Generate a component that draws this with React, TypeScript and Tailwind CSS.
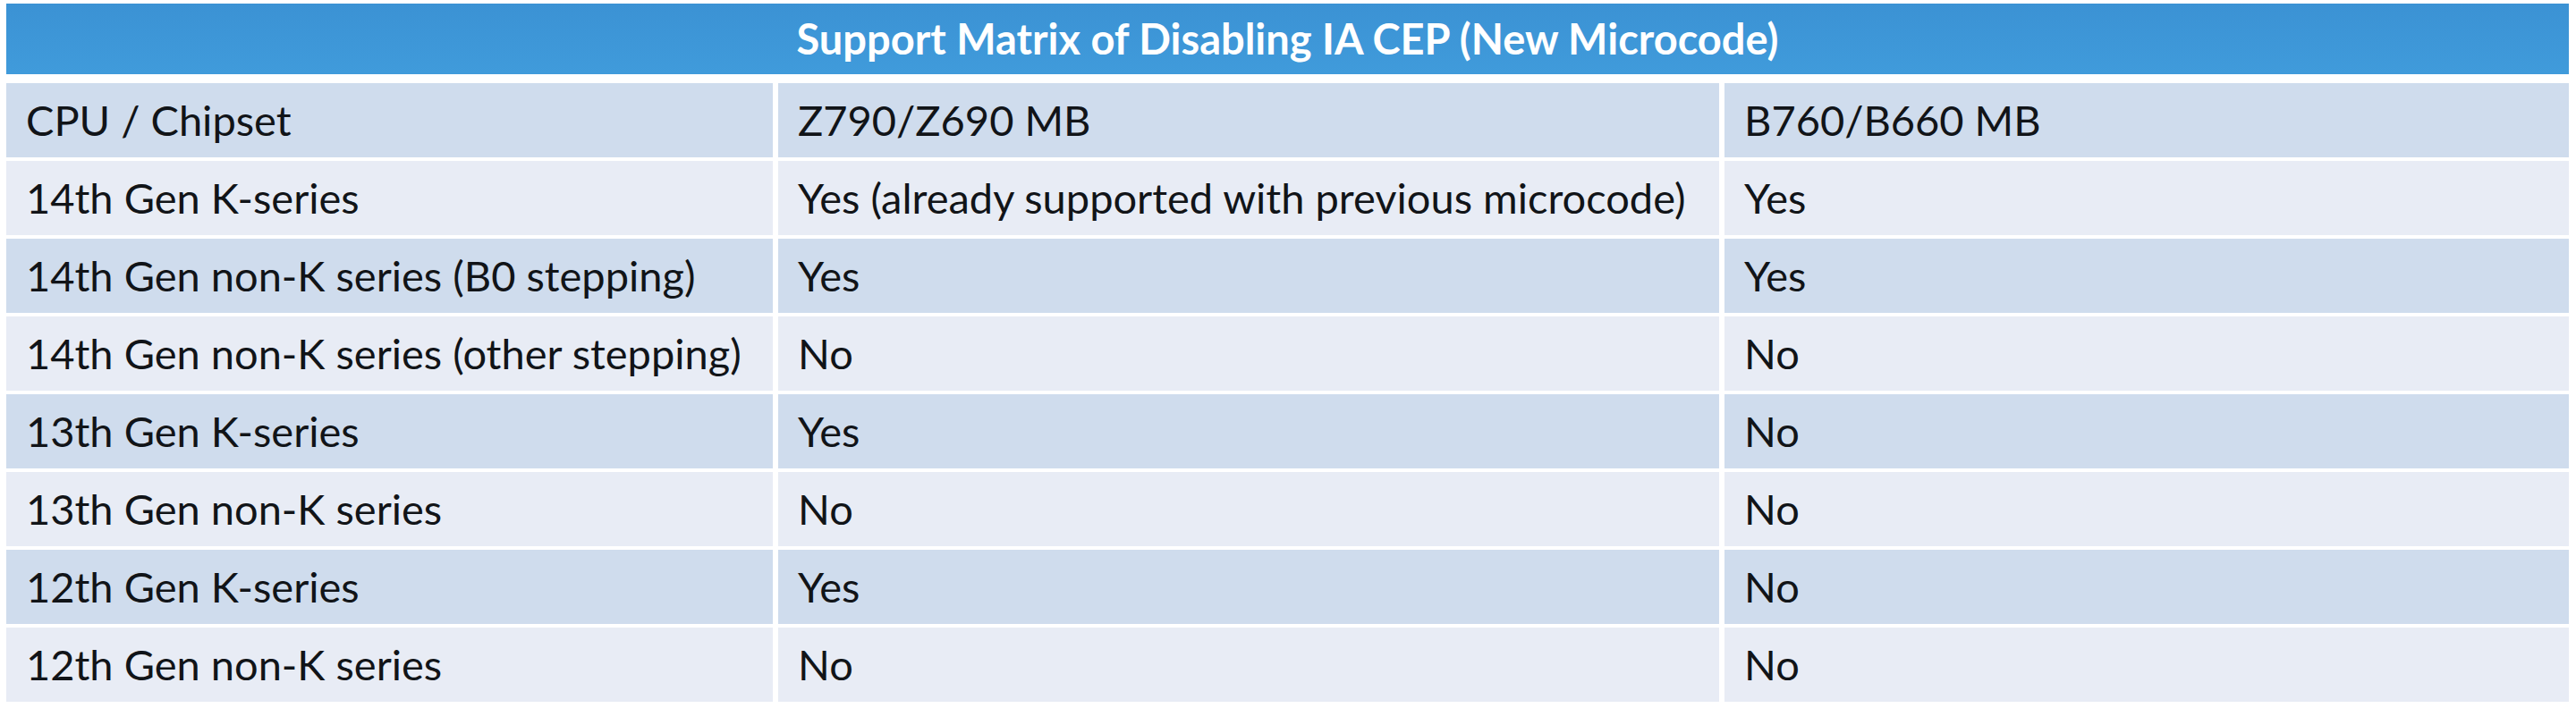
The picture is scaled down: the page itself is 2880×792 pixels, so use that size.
import React from "react";

const rows: [string, string, string][] = [
  ["CPU / Chipset", "Z790/Z690 MB", "B760/B660 MB"],
  ["14th Gen K-series", "Yes (already supported with previous microcode)", "Yes"],
  ["14th Gen non-K series (B0 stepping)", "Yes", "Yes"],
  ["14th Gen non-K series (other stepping)", "No", "No"],
  ["13th Gen K-series", "Yes", "No"],
  ["13th Gen non-K series", "No", "No"],
  ["12th Gen K-series", "Yes", "No"],
  ["12th Gen non-K series", "No", "No"],
];

export default function App() {
  return (
    <div className="w-[2880px] h-[792px] bg-white pt-[4px] pl-[7px] overflow-hidden font-['Lato','Liberation_Sans',sans-serif] text-[#111418]">
      {/* Title bar */}
      <div className="w-[2865px] h-[79px] bg-gradient-to-b from-[#3b92d4] to-[#409bdb] flex items-center justify-center">
        <span className="text-white font-bold text-[47px] leading-none">
          Support Matrix of Disabling IA CEP (New Microcode)
        </span>
      </div>

      <div className="mt-[10px] grid grid-cols-[857px_1052px_944px] gap-x-[6px] gap-y-[4px]">
        {rows.map((row, i) => {
          const bg = i % 2 === 0 ? "bg-[#cfdced]" : "bg-[#e8ecf5]";
          return row.map((cell, j) => (
            <div
              key={`${i}-${j}`}
              className={`h-[83px] flex items-center pl-[22px] text-[47px] leading-none ${bg}`}
            >
              {cell}
            </div>
          ));
        })}
      </div>
    </div>
  );
}
